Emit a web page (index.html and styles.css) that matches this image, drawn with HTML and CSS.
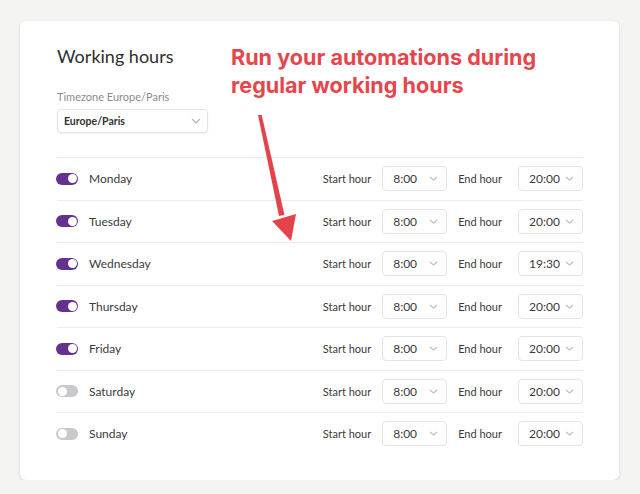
FILE: index.html
```html
<!DOCTYPE html>
<html lang="en">
<head>
  <meta charset="UTF-8">
  <meta name="viewport" content="width=device-width, initial-scale=1.0">
  <title>Working hours</title>
  <link rel="stylesheet" href="styles.css">
</head>
<body>
  <div class="card">
    <!-- Header -->
    <h1>Working hours</h1>
    <label class="tz-label" for="timezone">Timezone Europe/Paris</label>
    <div class="select tz-select" id="timezone">
      <span>Europe/Paris</span>
      <svg class="chevron" width="10" height="6" viewBox="0 0 10 6"><path d="M1 1l4 4 4-4" fill="none" stroke="#b5b5b5" stroke-width="1.2"/></svg>
    </div>

    <!-- Days -->
    <div class="days" id="days"></div>

    <!-- Annotation -->
    <div class="note">Run your automations during<br>regular working hours</div>
    <svg class="arrow" width="60" height="140" viewBox="0 0 60 140">
      <polygon points="0,0 3.5,-1 26.5,100 21,101" transform="translate(17,0)" fill="#e5434b"/>
      <polygon points="31,106 55,99 50,126" fill="#e5434b"/>
    </svg>
  </div>

  <script>
    const days = [
      { name: 'Monday', on: true, start: '8:00', end: '20:00' },
      { name: 'Tuesday', on: true, start: '8:00', end: '20:00' },
      { name: 'Wednesday', on: true, start: '8:00', end: '19:30' },
      { name: 'Thursday', on: true, start: '8:00', end: '20:00' },
      { name: 'Friday', on: true, start: '8:00', end: '20:00' },
      { name: 'Saturday', on: false, start: '8:00', end: '20:00' },
      { name: 'Sunday', on: false, start: '8:00', end: '20:00' }
    ];

    const chevron = '<svg class="chevron" width="9" height="5" viewBox="0 0 9 5"><path d="M1 0.8l3.5 3.3 3.5-3.3" fill="none" stroke="#b5b5b5" stroke-width="1.1"/></svg>';

    document.getElementById('days').innerHTML = days.map(d => `
      <div class="day-row">
        <span class="toggle ${d.on ? 'on' : ''}"><span class="knob"></span></span>
        <span class="day-name">${d.name}</span>
        <span class="hour-label">Start hour</span>
        <div class="select hour-select"><span>${d.start}</span>${chevron}</div>
        <span class="hour-label end">End hour</span>
        <div class="select hour-select"><span>${d.end}</span>${chevron}</div>
      </div>
    `).join('');
  </script>
</body>
</html>
```

FILE: styles.css
```css
body {
  margin: 0;
  background-color: #f4f4f2;
  font-family: Lato, "Open Sans", sans-serif;
  color: #363636;
}

.card {
  position: relative;
  box-sizing: border-box;
  width: 599px;
  height: 459px;
  margin: 21px 0 0 20px;
  padding: 24px 36px 0 37px;
  background-color: #fff;
  border-radius: 6px;
  box-shadow: 0 1px 3px rgba(0, 0, 0, 0.14);
}

h1 {
  margin: 0;
  font-size: 18px;
  font-weight: 400;
  line-height: 22px;
  color: #2e2e30;
}

.tz-label {
  display: block;
  margin-top: 23px;
  font-size: 11px;
  line-height: 14px;
  color: #8c8c8c;
}

.select {
  box-sizing: border-box;
  display: flex;
  align-items: center;
  justify-content: space-between;
  border: 1px solid #e4e4e4;
  border-radius: 4px;
  background-color: #fff;
}

.tz-select {
  width: 151px;
  height: 24px;
  margin-top: 5px;
  padding: 0 6px 0 6px;
  font-size: 10.5px;
  font-weight: 700;
  color: #333;
  box-shadow: 0 1px 2px rgba(0, 0, 0, 0.05);
}

.days {
  margin-top: 24px;
}

.day-row {
  display: flex;
  align-items: center;
  height: 42.5px;
  border-top: 1px solid #ededed;
  box-sizing: border-box;
}

.toggle {
  position: relative;
  width: 22px;
  height: 12px;
  margin-left: -1px;
  border-radius: 6px;
  background-color: #c9c8cc;
}

.toggle.on {
  background-color: #66308f;
}

.knob {
  position: absolute;
  top: 1.5px;
  left: 1.5px;
  width: 9px;
  height: 9px;
  border-radius: 50%;
  background-color: #fff;
}

.toggle.on .knob {
  left: 11.5px;
}

.day-name {
  margin-left: 11px;
  font-size: 12px;
  color: #3a3a3c;
  flex: 1;
}

.hour-label {
  font-size: 11px;
  color: #3a3a3c;
  margin-right: 11px;
}

.hour-label.end {
  margin-left: 11px;
  margin-right: 16px;
}

.hour-select {
  width: 65px;
  height: 25px;
  padding: 0 8px 0 10px;
  font-size: 12px;
  color: #3a3a3c;
}

.note {
  position: absolute;
  left: 211px;
  top: 22px;
  font-family: Inter, Roboto, sans-serif;
  font-size: 21.6px;
  font-weight: 700;
  line-height: 28px;
  color: #e6454c;
}

.arrow {
  position: absolute;
  left: 221px;
  top: 94px;
}
```
